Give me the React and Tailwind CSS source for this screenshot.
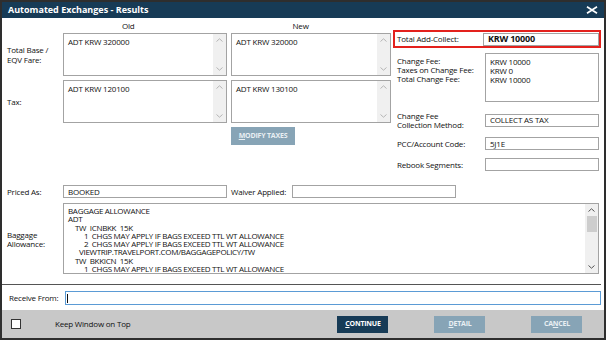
import React from 'react'

const FONT = "font-['Open_Sans','Noto_Sans',sans-serif]"

function Chevron({ up, className = '' }) {
  return (
    <svg width="7" height="4" viewBox="0 0 7 4" className={className}>
      <path d={up ? 'M0.5 3.5L3.5 0.8L6.5 3.5' : 'M0.5 0.5L3.5 3.2L6.5 0.5'} stroke="currentColor" strokeWidth="1" fill="none" />
    </svg>
  )
}

function ScrollBar() {
  return (
    <div className="w-[13px] h-full bg-[#f0f0f0] flex flex-col items-center justify-between py-[4px] text-[#b5b5b5]">
      <Chevron up />
      <Chevron />
    </div>
  )
}

function TextBox({ w, children }) {
  return (
    <div className={`${w} h-[43px] border border-[#a3a3a3] bg-white flex`}>
      <div className="flex-1 pl-[4px] pt-[3px] leading-[9px]">{children}</div>
      <ScrollBar />
    </div>
  )
}

function Field({ w, value, bold }) {
  return (
    <div className={`${w} h-[13px] border border-[#a3a3a3] bg-white flex items-center pl-[4px] ${bold ? 'font-bold text-[9px]' : ''}`}>
      {value}
    </div>
  )
}

function Btn({ children, dark }) {
  return (
    <div className={`w-[51px] h-[17px] flex items-center justify-center text-[7px] font-bold ${dark ? 'bg-[#173b56] text-white' : 'bg-[#87a4b6] text-[#e9eff3]'}`}>
      {children}
    </div>
  )
}

export default function App() {
  return (
    <div className={`w-[606px] h-[340px] border-2 border-[#2e2e2e] bg-white flex flex-col overflow-hidden text-[8px] text-[#111] tracking-[-0.2px] ${FONT}`}>
      {/* Title bar */}
      <div className="h-[16px] bg-[#173b56] flex items-center justify-between pl-[6px] pr-[6px] shrink-0">
        <span className="text-white font-bold text-[9px] tracking-normal">Automated Exchanges - Results</span>
        <svg width="12" height="8" viewBox="0 0 12 8">
          <path d="M1 0.8L11 7.2M11 0.8L1 7.2" stroke="white" strokeWidth="1.7" />
        </svg>
      </div>

      <div className="flex-1 flex flex-col">
        {/* Top section */}
        <div className="flex items-start h-[148px]">
          <div className="w-[389px] flex flex-col">
            <div className="h-[15px] flex items-center">
              <span className="ml-[120px]">Old</span>
              <span className="ml-[158px]">New</span>
            </div>
            <div className="flex">
              <div className="w-[61px] pl-[5px] flex items-center leading-[10px] font-medium">Total Base /<br />EQV Fare:</div>
              <TextBox w="w-[164px]">ADT KRW 320000</TextBox>
              <div className="w-[4px]" />
              <TextBox w="w-[160px]">ADT KRW 320000</TextBox>
            </div>
            <div className="flex mt-[4px]">
              <div className="w-[61px] pl-[5px] flex items-center font-medium">Tax:</div>
              <TextBox w="w-[164px]">ADT KRW 120100</TextBox>
              <div className="w-[4px]" />
              <TextBox w="w-[160px]">ADT KRW 130100</TextBox>
            </div>
            <div className="mt-[4px] ml-[229px] w-[64px] h-[18px] bg-[#87a4b6] text-[#e9eff3] text-[7px] font-bold flex items-center justify-center">
              <span><span className="underline">M</span>ODIFY TAXES</span>
            </div>
          </div>

          <div className="ml-[2px] w-[208px] flex flex-col pt-[12px]">
            <div className="h-[18px] border-2 border-[#e3211d] flex items-center">
              <span className="w-[88px] pl-[2px]">Total Add-Collect:</span>
              <Field w="w-[116px]" value="KRW 10000" bold />
            </div>
            <div className="flex mt-[5px]">
              <div className="w-[92px] pl-[4px] pt-[3px] leading-[9px]">
                Change Fee:<br />Taxes on Change Fee:<br />Total Change Fee:
              </div>
              <div className="w-[114px] h-[49px] border border-[#a3a3a3] pl-[4px] pt-[3px] leading-[9px]">
                KRW 10000<br />KRW 0<br />KRW 10000
              </div>
            </div>
            <div className="flex items-center mt-[9px]">
              <div className="w-[92px] pl-[4px] leading-[8.5px] pt-[1px] font-medium">Change Fee<br />Collection Method:</div>
              <Field w="w-[114px]" value="COLLECT AS TAX" />
            </div>
            <div className="flex items-center mt-[8px]">
              <div className="w-[92px] pl-[4px] font-medium">PCC/Account Code:</div>
              <Field w="w-[114px]" value="5J1E" />
            </div>
            <div className="flex items-center mt-[8px]">
              <div className="w-[92px] pl-[4px] font-medium">Rebook Segments:</div>
              <Field w="w-[114px]" value="" />
            </div>
          </div>
        </div>

        {/* Priced As */}
        <div className="flex items-center mt-[19px]">
          <div className="w-[61px] pl-[5px] font-medium">Priced As:</div>
          <Field w="w-[164px]" value="BOOKED" />
          <div className="w-[61px] ml-[4px] font-medium">Waiver Applied:</div>
          <Field w="w-[164px]" value="" />
        </div>

        {/* Baggage */}
        <div className="flex mt-[5px]">
          <div className="w-[61px] pl-[5px] flex items-center leading-[9px] font-medium">Baggage<br />Allowance:</div>
          <div className="w-[536px] h-[71px] border border-[#a3a3a3] flex overflow-hidden">
            <div className="flex-1 pl-[4px] pt-[3px] leading-[8.3px] whitespace-nowrap overflow-hidden tracking-[-0.3px]">
              <div>BAGGAGE ALLOWANCE</div>
              <div>ADT</div>
              <div className="pl-[7px]">TW&nbsp;&nbsp;ICNBKK&nbsp;&nbsp;15K</div>
              <div className="pl-[16px]">1&nbsp;&nbsp;CHGS MAY APPLY IF BAGS EXCEED TTL WT ALLOWANCE</div>
              <div className="pl-[16px]">2&nbsp;&nbsp;CHGS MAY APPLY IF BAGS EXCEED TTL WT ALLOWANCE</div>
              <div className="pl-[11px]">VIEWTRIP.TRAVELPORT.COM/BAGGAGEPOLICY/TW</div>
              <div className="pl-[7px]">TW&nbsp;&nbsp;BKKICN&nbsp;&nbsp;15K</div>
              <div className="pl-[16px]">1&nbsp;&nbsp;CHGS MAY APPLY IF BAGS EXCEED TTL WT ALLOWANCE</div>
            </div>
            <div className="w-[13px] h-full bg-[#f0f0f0] flex flex-col items-center text-[#555] pt-[4px]">
              <Chevron up />
              <div className="w-[10px] h-[16px] bg-[#cdcdcd] mt-[4px]" />
              <Chevron className="mt-auto mb-[4px]" />
            </div>
          </div>
        </div>

        {/* Separator */}
        <div className="h-px bg-[#555] mt-[10px] mr-[3px]" />

        {/* Receive From */}
        <div className="flex items-center mt-[6px]">
          <div className="w-[63px] pl-[7px]">Receive From:</div>
          <div className="flex-1 mr-[3px] h-[14px] border border-[#5b9bd5] flex items-center pl-[1px]">
            <div className="w-px h-[9px] bg-[#111]" />
          </div>
        </div>

        {/* Bottom bar */}
        <div className="mt-auto h-[28px] bg-[#c8c8c8] flex items-center">
          <div className="ml-[9px] w-[10px] h-[10px] border border-[#333] bg-white" />
          <span className="ml-[34px]">Keep Window on Top</span>
          <div className="ml-[207px]">
            <Btn dark><span><span className="underline">C</span>ONTINUE</span></Btn>
          </div>
          <div className="ml-[46px]">
            <Btn><span><span className="underline">D</span>ETAIL</span></Btn>
          </div>
          <div className="ml-[46px]">
            <Btn><span>CA<span className="underline">N</span>CEL</span></Btn>
          </div>
        </div>
      </div>
    </div>
  )
}
